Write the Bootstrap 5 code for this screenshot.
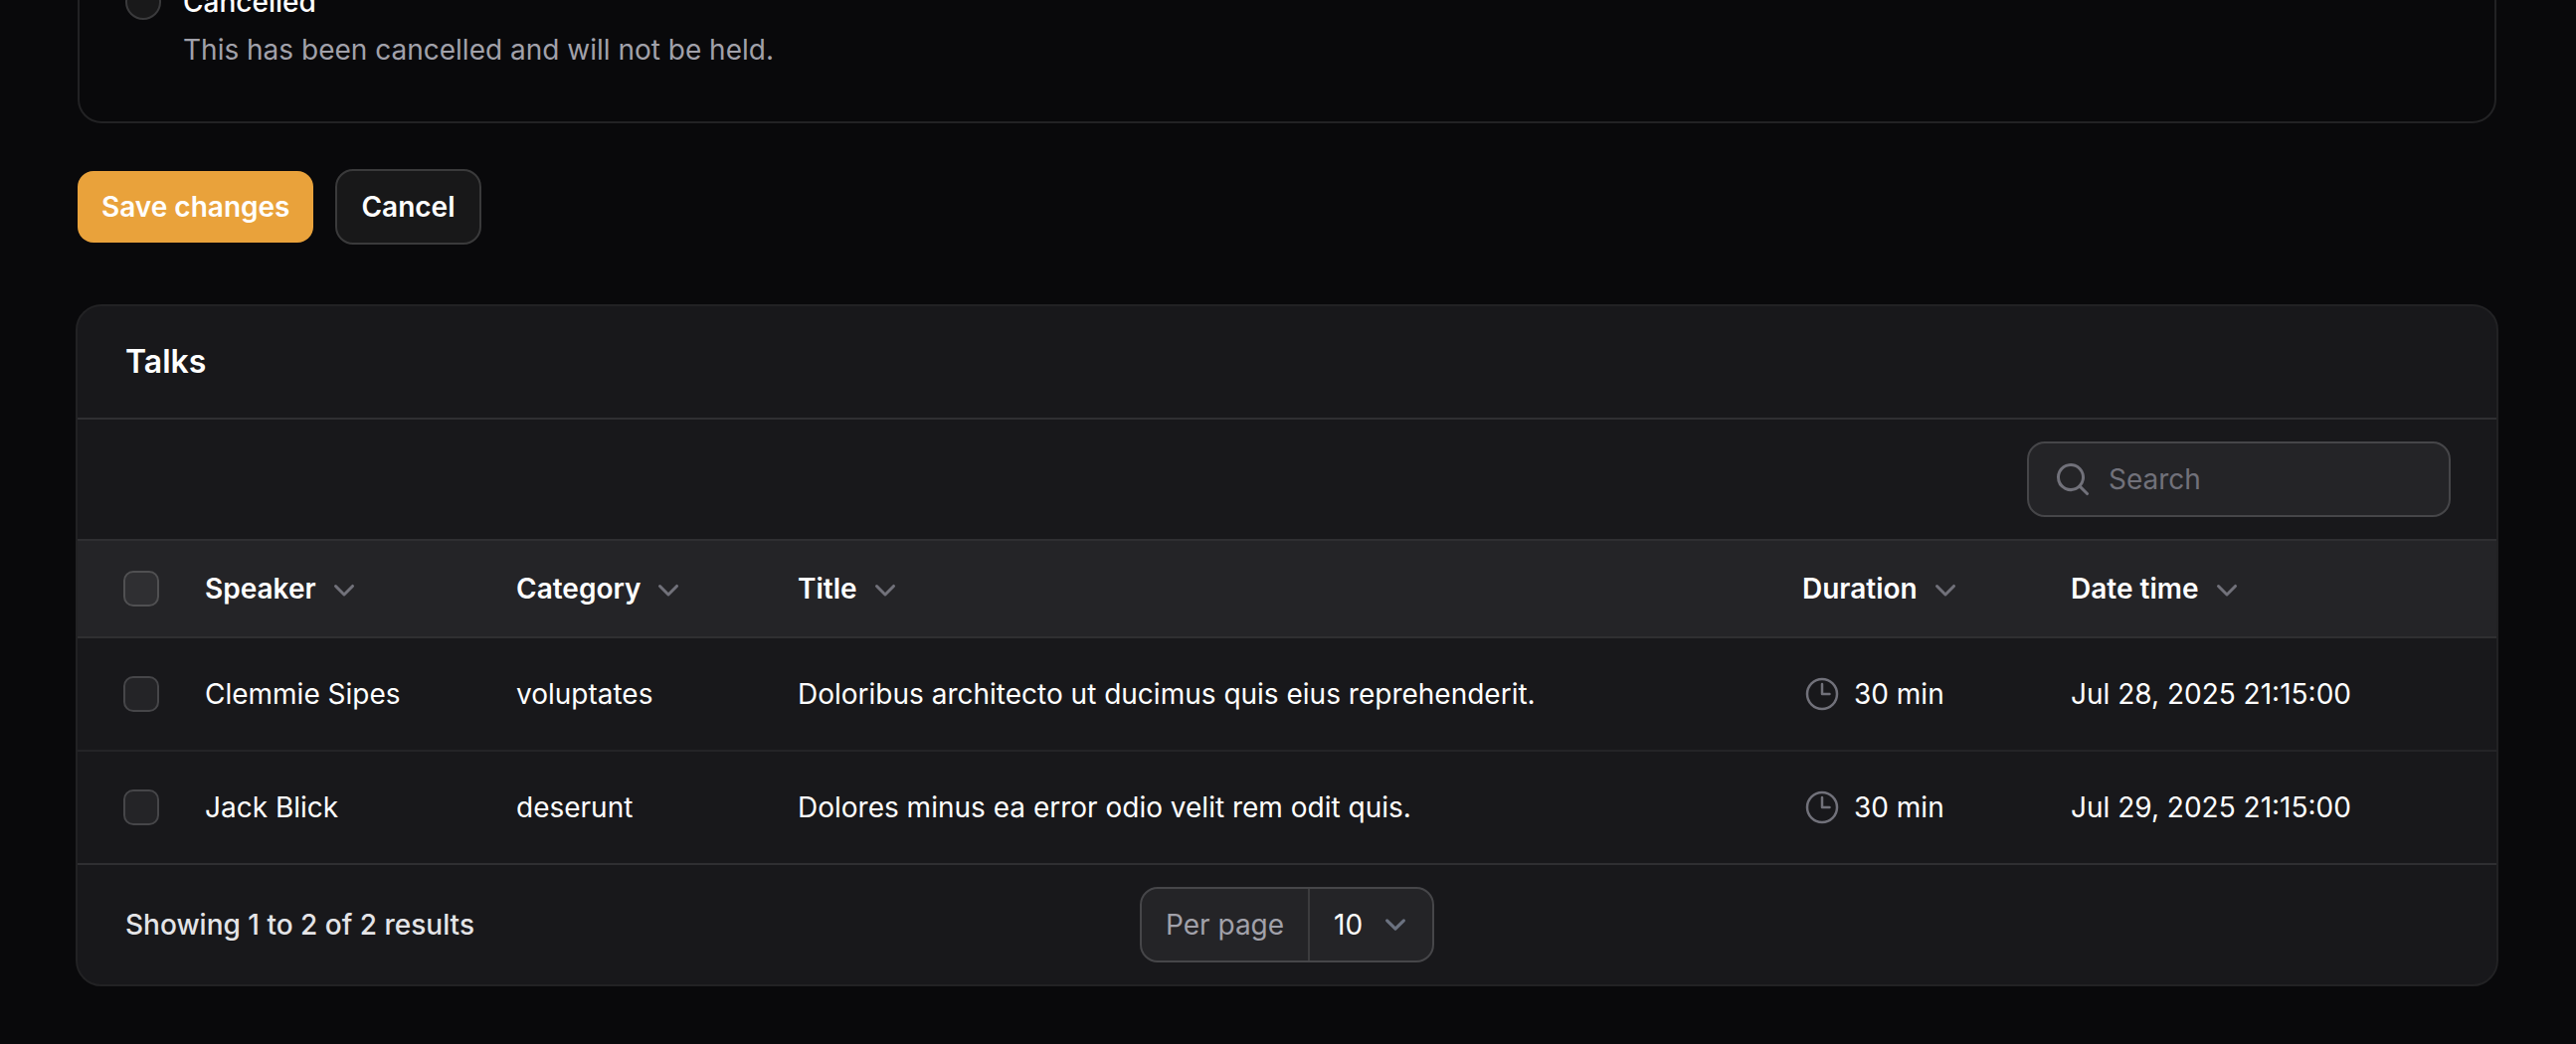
<!DOCTYPE html>
<html lang="en" data-bs-theme="dark">
<head>
<meta charset="utf-8">
<meta name="viewport" content="width=device-width, initial-scale=1">
<title>Talks</title>
<link href="https://cdn.jsdelivr.net/npm/bootstrap@5.3.0/dist/css/bootstrap.min.css" rel="stylesheet">
<style>
  :root { --page: #09090b; --panel: #18181b; --line: rgba(255,255,255,.1); --muted: #a1a1aa; --dim: #71717a; }
  body { background: var(--page); color: #fff; font-family: Inter, "Liberation Sans", sans-serif; font-size: 28px; line-height: 48px; overflow: hidden; }
  .page-wrap { padding: 0 78px 0 76px; }
  .status-box { margin: -72px 2px 0; padding: 48px; border: 2px solid #222224; border-radius: 24px; width: 2432px; }
  .status-box .form-check { padding: 0; margin: 0 0 0 -2px; min-height: 0; gap: 22px; }
  .status-name { font-weight: 500; }
  .tick { float: none !important; flex: none; width: 36px; height: 36px; margin: 0 !important; background-color: #242427; border: 2px solid #464649; display: block; }
  .tick[type=checkbox] { border-radius: 10px; }
  thead .tick { background-color: #2f2f32; border-color: #505052; }
  .status-box .tick { background-color: #19191a; border-color: #3a3a3c; margin-top: 6px !important; }
  .text-soft { color: var(--muted); }
  .actions { margin: 46px 0 0 2px; gap: 22px; }
  .actions .btn { font-size: 28px; font-weight: 600; line-height: 40px; padding: 16px 24px; color: #fff; border: 0; border-radius: 16px; }
  .btn-save { background: #e9a23b; }
  .actions .btn-plain { background: #181819; border: 2px solid #3a3a3b; border-radius: 18px; }
  .panel { margin-top: 60px; width: 2436px; background: var(--panel); border: 2px solid #222224; border-radius: 26px; overflow: hidden; }
  .panel-top { height: 114px; padding: 0 48px; font-size: 32px; font-weight: 600; border-bottom: 2px solid var(--line); }
  .panel-tools { height: 122px; padding: 0 46px; border-bottom: 2px solid var(--line); }
  .search-box { width: 426px; height: 76px; background: #242427; border: 2px solid #464649; border-radius: 18px; padding-left: 24px; gap: 16px; }
  .search-box input { background: none; border: 0; color: #fff; font-size: 28px; line-height: 48px; padding: 0; box-shadow: none !important; }
  .search-box input::placeholder { color: var(--dim); opacity: 1; }
  .talks { table-layout: fixed; border-collapse: separate; border-spacing: 0; width: 2432px; margin: 0; --bs-table-bg: transparent; --bs-table-color: #fff; color: #fff; }
  .talks th, .talks td { padding: 0 24px; vertical-align: middle; border: 0; white-space: nowrap; }
  .talks th { height: 98px; background: #242427; font-weight: 600; border-bottom: 2px solid #2f2f31; }
  .talks td { height: 114px; border-bottom: 2px solid #242427; }
  .talks tr:last-child td { border-bottom-color: #2f2f32; }
  .talks tr > :first-child { padding: 0 0 0 46px; }
  .talks thead tr > th { border-bottom: 2px solid #2f2f31; }
  .c-check { width: 104px; } .c-speaker { width: 313px; } .c-category { width: 283px; } .c-title { width: 1010px; } .c-duration { width: 270px; }
  .glyph { width: 40px; height: 40px; flex: none; color: var(--dim); }
  .sorter { gap: 8px; }
  .panel-foot { height: 120px; padding: 0 48px; display: grid; grid-template-columns: 1fr auto 1fr; align-items: center; }
  .shown { color: #e4e4e7; font-weight: 500; }
  .per-page { width: 296px; height: 76px; background: #242427; border: 2px solid #464649; border-radius: 18px; }
  .per-page .cap { width: 169px; padding-left: 24px; height: 72px; line-height: 72px; border-right: 2px solid #3c3c3e; color: var(--muted); }
  .per-page .pick { padding: 0 16px 0 24px; }
  .per-page .caret { width: 42px; height: 42px; }
</style>
<script src="https://cdn.jsdelivr.net/npm/bootstrap@5.3.0/dist/js/bootstrap.bundle.min.js"></script>
</head>
<body>
<svg class="d-none" xmlns="http://www.w3.org/2000/svg">
  <symbol id="chev" viewBox="0 0 20 20"><path fill="currentColor" fill-rule="evenodd" d="M5.22 8.22a.75.75 0 0 1 1.06 0L10 11.94l3.72-3.72a.75.75 0 1 1 1.06 1.06l-4.25 4.25a.75.75 0 0 1-1.06 0L5.22 9.28a.75.75 0 0 1 0-1.06Z"/></symbol>
  <symbol id="clock" viewBox="0 0 24 24"><path fill="none" stroke="currentColor" stroke-width="1.5" stroke-linecap="round" stroke-linejoin="round" d="M12 6v6h4.500m4.500 0a9 9 0 1 1-18 0 9 9 0 0 1 18 0Z"/></symbol>
  <symbol id="lens" viewBox="0 0 20 20"><path fill="currentColor" fill-rule="evenodd" d="M9 3.500a5.500 5.500 0 1 0 0 11 5.500 5.500 0 0 0 0-11ZM2 9a7 7 0 1 1 12.452 4.391l3.328 3.329a.75.75 0 1 1-1.060 1.060l-3.329-3.328A7 7 0 0 1 2 9Z"/></symbol>
</svg>
<main class="page-wrap">
  <section class="status-box">
    <label class="form-check d-flex align-items-start">
      <input class="form-check-input tick" type="radio" name="status">
      <span><span class="d-block status-name">Cancelled</span><span class="d-block text-soft">This has been cancelled and will not be held.</span></span>
    </label>
  </section>

  <div class="actions d-flex align-items-center">
    <button class="btn btn-save">Save changes</button>
    <button class="btn btn-plain">Cancel</button>
  </div>

  <section class="panel">
    <header class="panel-top d-flex align-items-center">Talks</header>
    <div class="panel-tools d-flex align-items-center justify-content-end">
      <div class="search-box d-flex align-items-center">
        <svg class="glyph"><use href="#lens"/></svg>
        <input class="form-control" type="text" placeholder="Search">
      </div>
    </div>
    <table class="table talks">
      <colgroup><col class="c-check"><col class="c-speaker"><col class="c-category"><col class="c-title"><col class="c-duration"><col></colgroup>
      <thead>
        <tr>
          <th><input class="form-check-input tick" type="checkbox"></th>
          <th><span class="sorter d-flex align-items-center">Speaker <svg class="glyph"><use href="#chev"/></svg></span></th>
          <th><span class="sorter d-flex align-items-center">Category <svg class="glyph"><use href="#chev"/></svg></span></th>
          <th><span class="sorter d-flex align-items-center">Title <svg class="glyph"><use href="#chev"/></svg></span></th>
          <th><span class="sorter d-flex align-items-center">Duration <svg class="glyph"><use href="#chev"/></svg></span></th>
          <th><span class="sorter d-flex align-items-center">Date time <svg class="glyph"><use href="#chev"/></svg></span></th>
        </tr>
      </thead>
      <tbody>
        <tr>
          <td><input class="form-check-input tick" type="checkbox"></td>
          <td>Clemmie Sipes</td>
          <td>voluptates</td>
          <td>Doloribus architecto ut ducimus quis eius reprehenderit.</td>
          <td><span class="d-flex align-items-center"><svg class="glyph me-2"><use href="#clock"/></svg><span class="ps-1">30 min</span></span></td>
          <td>Jul 28, 2025 21:15:00</td>
        </tr>
        <tr>
          <td><input class="form-check-input tick" type="checkbox"></td>
          <td>Jack Blick</td>
          <td>deserunt</td>
          <td>Dolores minus ea error odio velit rem odit quis.</td>
          <td><span class="d-flex align-items-center"><svg class="glyph me-2"><use href="#clock"/></svg><span class="ps-1">30 min</span></span></td>
          <td>Jul 29, 2025 21:15:00</td>
        </tr>
      </tbody>
    </table>
    <footer class="panel-foot">
      <span class="shown">Showing 1 to 2 of 2 results</span>
      <div class="per-page d-flex align-items-center">
        <span class="cap">Per page</span>
        <span class="pick d-flex align-items-center justify-content-between flex-grow-1">10
          <svg class="caret" viewBox="0 0 20 20"><path d="m6 8 4 4 4-4" fill="none" stroke="#6b7280" stroke-width="1.5" stroke-linecap="round" stroke-linejoin="round"/></svg>
        </span>
      </div>
    </footer>
  </section>
</main>
</body>
</html>
